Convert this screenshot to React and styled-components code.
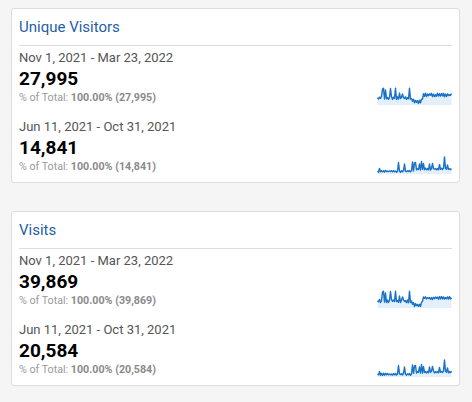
import React from 'react';
import styled, { createGlobalStyle } from 'styled-components';

const GlobalStyle = createGlobalStyle`
  html, body {
    margin: 0;
    padding: 0;
    background: #f5f5f5;
  }
  body {
    font-family: Roboto, "Liberation Sans", Arial, sans-serif;
  }
`;

const Page = styled.div`
  padding: 8px 12px 0 11px;
  display: flex;
  flex-direction: column;
  gap: 28px;
`;

const Card = styled.div`
  background: #fff;
  border: 1px solid #dcdcdc;
  border-radius: 3px;
  padding: 8px 7px 8px 7px;
`;

const CardTitle = styled.h2`
  margin: 0 0 8px;
  font-size: 15px;
  line-height: 20px;
  font-weight: 400;
  color: #1f5fa6;
`;

const Divider = styled.div`
  height: 1px;
  background: #dddddd;
  margin-bottom: 2px;
`;

const Period = styled.div`
  display: flex;
  justify-content: space-between;
  align-items: flex-end;
  & + & {
    margin-top: 12px;
  }
`;

const Stats = styled.div`
  display: flex;
  flex-direction: column;
`;

const DateRange = styled.div`
  font-size: 13px;
  line-height: 19px;
  color: #555;
`;

const Value = styled.div`
  font-size: 19px;
  line-height: 24px;
  font-weight: 700;
  color: #000;
`;

const Share = styled.div`
  font-size: 10.7px;
  line-height: 14px;
  color: #9a9a9a;
  b {
    font-weight: 700;
    color: #8a8a8a;
  }
`;

const Spark = styled.svg`
  display: block;
  width: 75px;
  height: 19px;
  margin-bottom: -1px;
`;

// small seeded generator so the sparklines stay the same on every render
const makeRng = (seed) => () => {
  seed = (seed * 16807) % 2147483647;
  return seed / 2147483647;
};

// one sample per pixel, alternating up/down for the day-to-day jitter
const buildPoints = ({ base, spikes, noise, seed }) => {
  const rand = makeRng(seed);
  const pts = [];
  for (let i = 0; i <= 74; i++) {
    const dir = i % 2 ? 1 : -1;
    let y = base(i) + dir * (0.2 + rand()) * noise;
    if (spikes[i] !== undefined) y = spikes[i];
    pts.push([i, Math.max(0.8, Math.min(17.3, y))]);
  }
  return pts;
};

const currentShape = {
  base: (x) => {
    if (x < 33) return 11;
    if (x < 37) return 11 + (x - 33) * 1;
    if (x < 44) return 15;
    if (x < 47) return 15 - (x - 43) * 2.2;
    return 8;
  },
  spikes: { 5: 2, 6: 1.2, 8: 3, 13: 1.5, 18: 1.2, 22: 6, 25: 7, 32: 1.2 },
  noise: 1.5,
};

const previousShape = {
  base: (x) => (x < 38 ? 15.3 : 13),
  spikes: { 2: 12.5, 21: 6.5, 27: 8, 35: 6, 37: 7, 38: 6.5, 42: 8, 44: 5.5, 46: 7.5, 52: 8, 55: 7.5, 62: 8.5, 67: 1, 70: 9 },
  noise: 0.9,
};

const Sparkline = ({ shape, seed }) => {
  const pts = buildPoints({ ...shape, seed });
  const line = pts.map(([x, y], i) => `${i ? 'L' : 'M'}${x + 0.5} ${y.toFixed(2)}`).join(' ');
  const area = `${line} L74.5 18 L0.5 18 Z`;
  return (
    <Spark viewBox="0 0 75 19">
      <path d={area} fill="#e3effb" />
      <path d={line} fill="none" stroke="#1a72c6" strokeWidth="1.4" strokeLinejoin="round" />
    </Spark>
  );
};

const metrics = [
  {
    title: 'Unique Visitors',
    periods: [
      { range: 'Nov 1, 2021 - Mar 23, 2022', value: '27,995', shape: currentShape, seed: 11 },
      { range: 'Jun 11, 2021 - Oct 31, 2021', value: '14,841', shape: previousShape, seed: 29 },
    ],
  },
  {
    title: 'Visits',
    periods: [
      { range: 'Nov 1, 2021 - Mar 23, 2022', value: '39,869', shape: currentShape, seed: 17 },
      { range: 'Jun 11, 2021 - Oct 31, 2021', value: '20,584', shape: previousShape, seed: 41 },
    ],
  },
];

const App = () => (
  <>
    <GlobalStyle />
    <Page>
      {metrics.map((m) => (
        <Card key={m.title}>
          <CardTitle>{m.title}</CardTitle>
          <Divider />
          {m.periods.map((p) => (
            <Period key={p.range}>
              <Stats>
                <DateRange>{p.range}</DateRange>
                <Value>{p.value}</Value>
                <Share>
                  % of Total: <b>100.00% ({p.value})</b>
                </Share>
              </Stats>
              <Sparkline shape={p.shape} seed={p.seed} />
            </Period>
          ))}
        </Card>
      ))}
    </Page>
  </>
);

export default App;
